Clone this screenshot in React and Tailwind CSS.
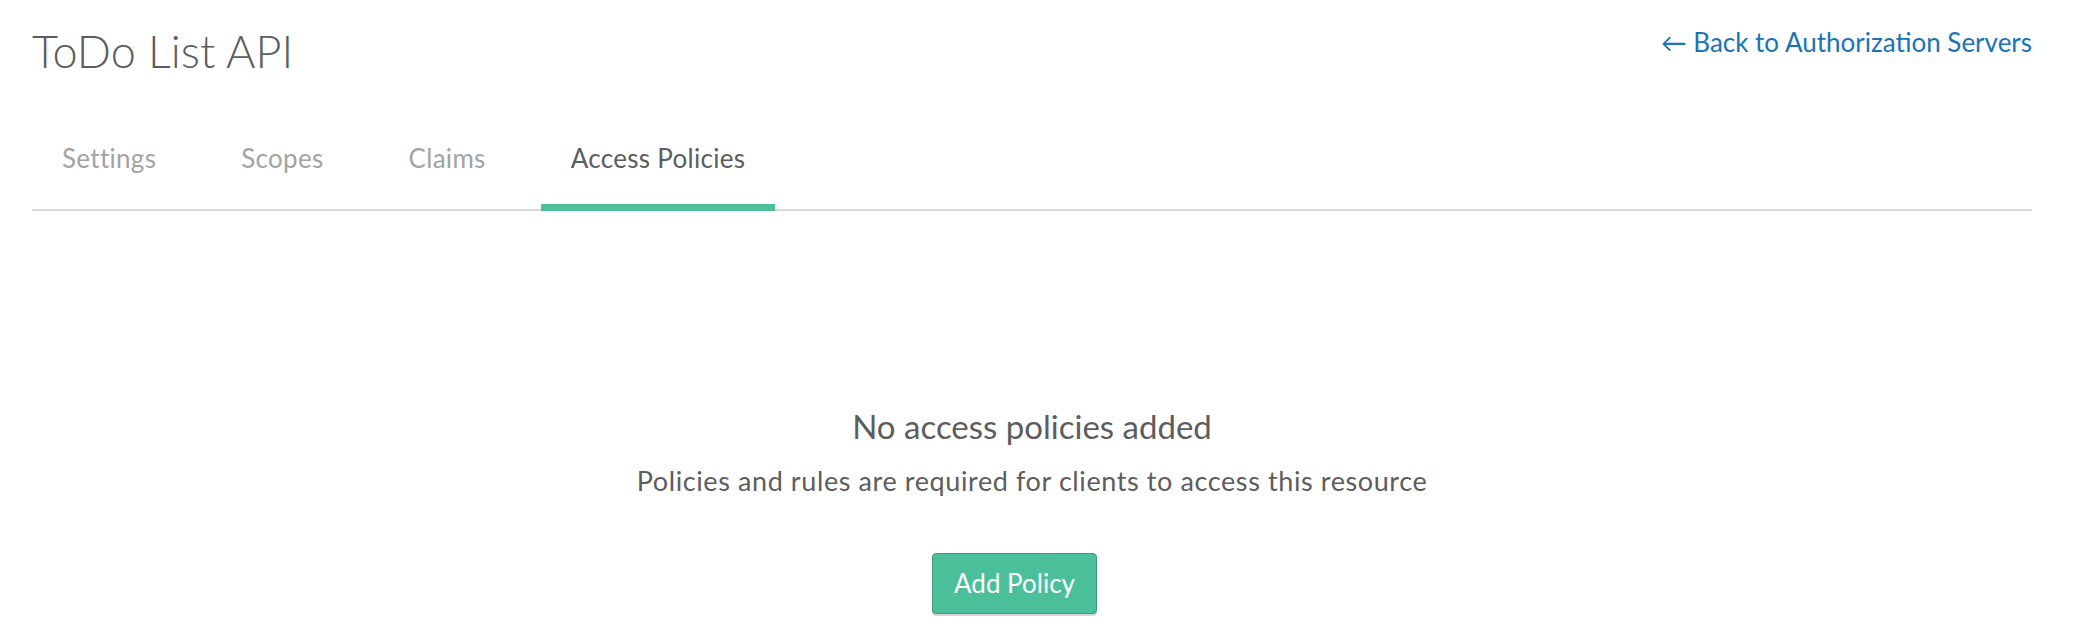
import React from 'react';

const TABS = ['Settings', 'Scopes', 'Claims', 'Access Policies'];
const ACTIVE = 'Access Policies';

export default function App() {
  return (
    <div
      className="min-h-screen bg-white pl-8 pr-[43px] text-[#5d5d5d]"
      style={{ fontFamily: 'Lato, "Open Sans", Arial, sans-serif' }}
    >
      {/* Header */}
      <div className="flex items-start justify-between">
        <h1 className="pt-[29px] text-[45px] font-light leading-none text-[#5d5d5d]">ToDo List API</h1>
        <a href="#" className="pt-[27px] text-[26px] leading-[30px] text-[#1a73b6]">
          ← Back to Authorization Servers
        </a>
      </div>

      {/* Tabs */}
      <div className="mt-[71px] flex gap-[25px] border-b-2 border-[#d8d8d8]">
        {TABS.map((t) => {
          const active = t === ACTIVE;
          return (
            <div
              key={t}
              className={
                '-mb-[2px] px-[30px] pb-[33px] text-[26px] leading-[26px] tracking-[0.3px] border-b-[7px] ' +
                (active ? 'border-[#4cc09b] text-[#5d5d5d]' : 'border-transparent text-[#a3a3a3]')
              }
            >
              {t}
            </div>
          );
        })}
      </div>

      {/* Empty state */}
      <div className="flex flex-col items-center pt-[195px]">
        <h2 className="text-[33px] leading-[40px] text-[#5d5d5d]">No access policies added</h2>
        <p className="mt-[19px] text-[27px] leading-[32px] tracking-[0.6px] text-[#5d5d5d]">
          Policies and rules are required for clients to access this resource
        </p>
        <button className="mt-[56px] mr-[35px] h-[61px] rounded-[4px] border border-[#3f9a7c] bg-[#4bbf99] px-[21px] text-[26px] text-white shadow-[0_2px_0_#d6d6d6]">
          Add Policy
        </button>
      </div>
    </div>
  );
}
